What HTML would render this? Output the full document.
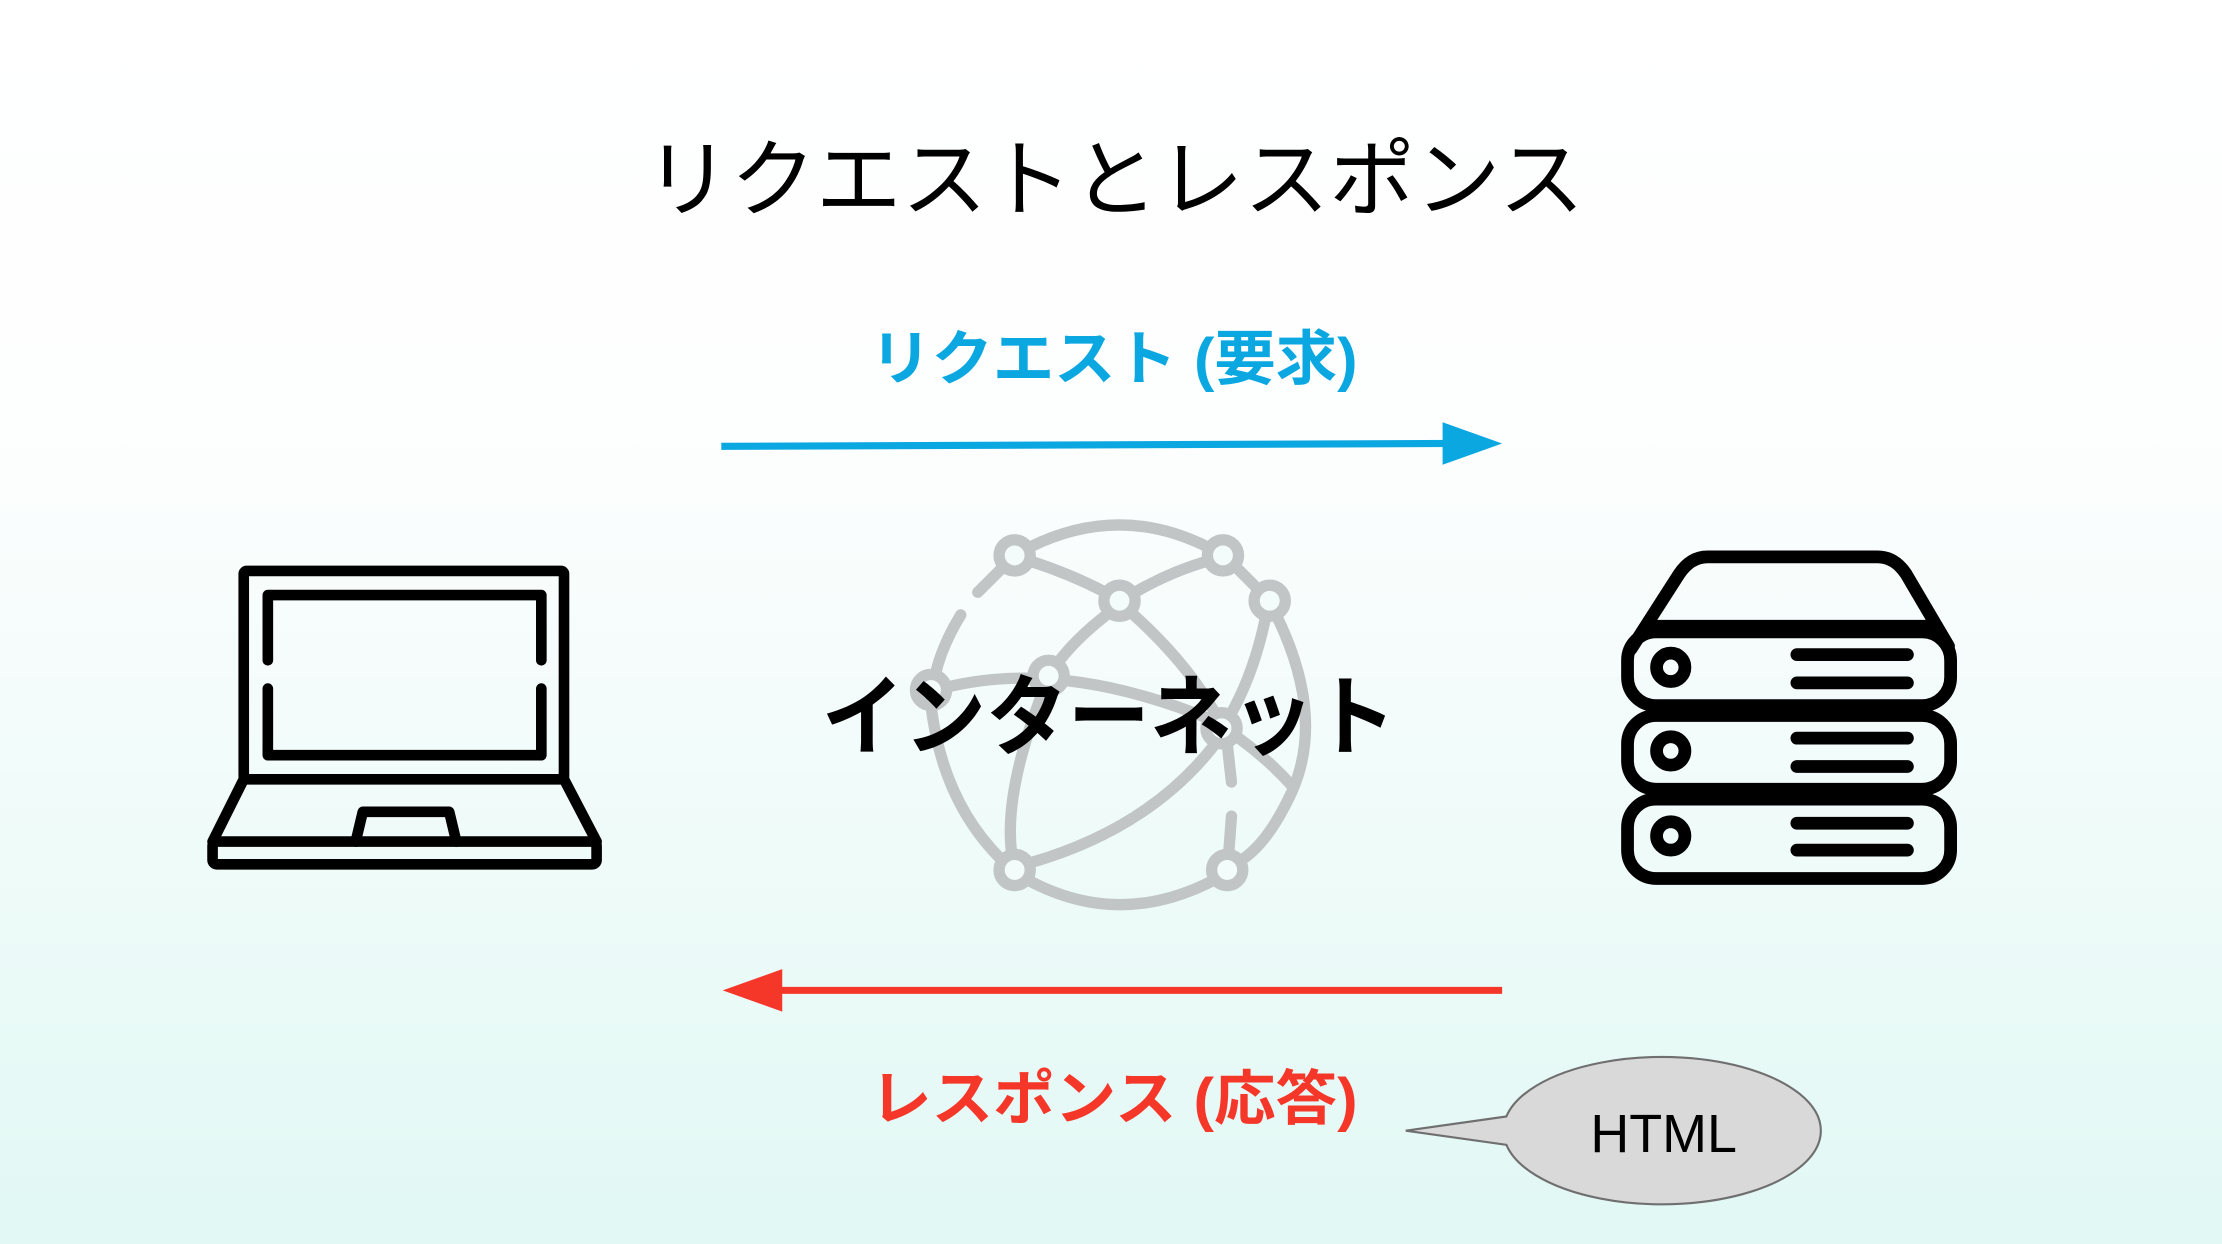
<!DOCTYPE html>
<html><head><meta charset="utf-8"><style>
html,body{margin:0;padding:0;width:2222px;height:1244px;overflow:hidden}
svg{display:block}
text{font-family:"Liberation Sans","Noto Sans CJK JP",sans-serif}
</style></head><body>
<svg width="2222" height="1244" viewBox="0 0 1568 878" preserveAspectRatio="none" xmlns="http://www.w3.org/2000/svg">
<defs><linearGradient id="bg" x1="0" y1="0" x2="0" y2="1">
<stop offset="0" stop-color="#ffffff"/><stop offset="0.35" stop-color="#fdfefe"/><stop offset="1" stop-color="#e1f8f4"/></linearGradient></defs>
<rect width="1568" height="878" fill="url(#bg)"/>
<text x="455" y="148" font-size="60" textLength="663" lengthAdjust="spacingAndGlyphs" fill="#000">リクエストとレスポンス</text>
<text x="614" y="268" font-size="42" textLength="344" lengthAdjust="spacingAndGlyphs" fill="#0aa7e1" font-weight="bold">リクエスト (要求)</text>
<text x="614" y="790" font-size="42" textLength="344" lengthAdjust="spacingAndGlyphs" fill="#f5372a" font-weight="bold">レスポンス (応答)</text>
<!-- arrows -->
<line x1="509" y1="315" x2="1025" y2="313" stroke="#0aa7e1" stroke-width="5"/>
<polygon points="1018,298 1060,313 1018,328" fill="#0aa7e1"/>
<line x1="1060" y1="699" x2="545" y2="699" stroke="#f5372a" stroke-width="5"/>
<polygon points="552,684 510,699 552,714" fill="#f5372a"/>
<!-- globe -->
<g fill="none" stroke="#c1c5c5" stroke-width="8" stroke-linecap="round">
<path d="M727,386 Q790,355 852,386"/>
<path d="M874,402 L886,414"/>
<path d="M901,435 Q935,505 912,558 Q895,595 876,607"/>
<path d="M855,622 Q790,655 727,622"/>
<path d="M706,606 Q665,565 657,498"/>
<path d="M660,476 Q665,455 678,434"/>
<path d="M690,418 L706,402"/>
<path d="M727,396 Q755,405 780,418"/>
<path d="M801,418 Q825,404 852,396"/>
<path d="M782,433 Q760,450 747,467"/>
<path d="M668,485 Q750,465 855,508 Q890,530 912,555"/>
<path d="M800,434 Q840,470 860,508"/>
<path d="M856,527 Q810,585 727,609"/>
<path d="M893,436 Q885,475 868,505"/>
<path d="M866,525 L869,552"/>
<path d="M869,576 L867,603"/>
<path d="M736,488 Q708,560 714,603"/>
</g>
<g fill="#f4fbfb" stroke="#c1c5c5" stroke-width="8">
<circle cx="716" cy="392" r="11"/><circle cx="863" cy="392" r="11"/>
<circle cx="790" cy="424" r="11"/><circle cx="896" cy="424" r="11"/>
<circle cx="657" cy="487" r="11"/><circle cx="740" cy="477" r="11"/>
<circle cx="862" cy="514" r="11"/><circle cx="716" cy="614" r="11"/>
<circle cx="866" cy="614" r="11"/>
</g>
<text x="580" y="528" font-size="62" textLength="405" lengthAdjust="spacingAndGlyphs" font-weight="bold" fill="#000">インターネット</text>
<!-- laptop -->
<g fill="none" stroke="#000" stroke-width="7.5" stroke-linejoin="round" stroke-linecap="round">
<rect x="172" y="403" width="226" height="147" rx="2"/>
<path d="M189,466 V420 H382 V466"/><path d="M189,486 V533 H382 V486"/>
<path d="M172,550 L150,594 M398,550 L421,594"/>
<rect x="150" y="594" width="271" height="16" rx="3"/>
<path d="M251,594 L256,573 H317 L322,594"/>
</g>
<!-- server -->
<g fill="none" stroke="#000" stroke-width="9" stroke-linejoin="round" stroke-linecap="round">
<path d="M1151,458 L1185,405 Q1193,393 1205,393 H1325 Q1337,393 1345,405 L1375,456"/>
<path d="M1166,442 H1362"/>
<rect x="1148.5" y="446" width="228" height="52" rx="20"/>
<rect x="1148.5" y="505" width="228" height="52" rx="20"/>
<rect x="1148.5" y="564" width="228" height="56" rx="20"/>
<circle cx="1179" cy="471" r="10"/><circle cx="1179" cy="530" r="10"/><circle cx="1179" cy="590" r="10"/>
<path d="M1268,462 H1346 M1268,482 H1346 M1268,521 H1346 M1268,541 H1346 M1268,581 H1346 M1268,600 H1346"/>
</g>
<!-- bubble -->
<path d="M1063,788 A112,52 0 1 1 1063,808 L992,798 Z" fill="#d9d9d9" stroke="#6f6f6f" stroke-width="1.5"/>
<text x="1174" y="813" font-size="38" text-anchor="middle" fill="#000">HTML</text>
</svg>
</body></html>
